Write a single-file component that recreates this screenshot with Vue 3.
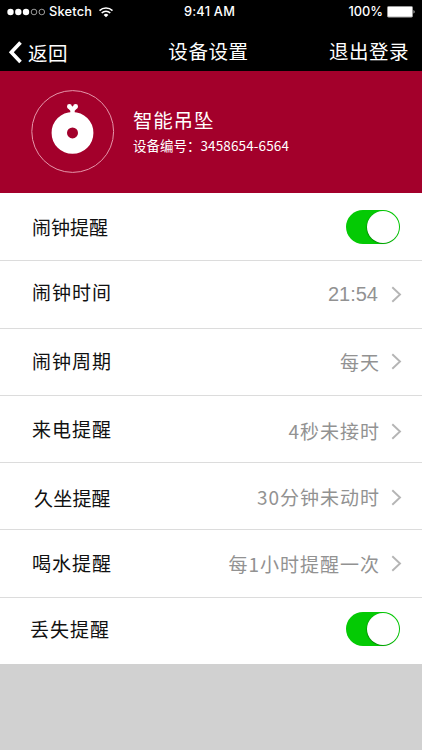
<script setup>
import { ref } from 'vue'

const rows = ref([
  { key: 'alarm', label: '闹钟提醒', toggle: true, on: true },
  { key: 'time', label: '闹钟时间', value: '21:54' },
  { key: 'cycle', label: '闹钟周期', value: '每天' },
  { key: 'call', label: '来电提醒', value: '4秒未接时' },
  { key: 'sit', label: '久坐提醒', value: '30分钟未动时' },
  { key: 'water', label: '喝水提醒', value: '每1小时提醒一次' },
  { key: 'lost', label: '丢失提醒', toggle: true, on: true },
])
</script>

<template>
  <div class="screen">
    <header class="top">
      <div class="status">
        <div class="carrier">
          <svg class="dots" width="39" height="8" viewBox="0 0 39 8">
            <g fill="#fff">
              <circle cx="3.5" cy="4" r="3.2" />
              <circle cx="11.3" cy="4" r="3.2" />
              <circle cx="19" cy="4" r="3.2" />
            </g>
            <g fill="none" stroke="#ddd" stroke-width=".7">
              <circle cx="27" cy="4" r="2.8" />
              <circle cx="34.8" cy="4" r="2.8" />
            </g>
          </svg>
          <span class="net">Sketch</span>
          <svg class="wifi" width="14" height="11" viewBox="0 0 14 11">
            <g fill="none" stroke="#fff" stroke-width="1.5">
              <path d="M.5 3.6a9.4 9.4 0 0 1 13 0" />
              <path d="M2.7 6a6.2 6.2 0 0 1 8.6 0" />
            </g>
            <path d="M4.6 7.9a3.4 3.4 0 0 1 4.8 0L7 10.3z" fill="#fff" />
          </svg>
        </div>
        <span class="clock">9:41 AM</span>
        <div class="power">
          <span>100%</span>
          <svg width="28" height="12" viewBox="0 0 28 12">
            <rect x=".5" y=".5" width="25" height="10.6" rx="1" fill="#fff" stroke="#999" />
            <path d="M26.6 4v3.6c1.2-.5 1.2-3.1 0-3.6z" fill="#fff" />
          </svg>
        </div>
      </div>
      <nav class="nav">
        <div class="back">
          <svg width="14" height="23" viewBox="0 0 14 23">
            <path d="M12.5 1.5 3.3 11.3 12.5 21.1" fill="none" stroke="#fff" stroke-width="3.6" />
          </svg>
          <span class="backtext">返回</span>
        </div>
        <h1 class="title">设备设置</h1>
        <span class="logout">退出登录</span>
      </nav>
    </header>

    <section class="device">
      <svg class="avatar" width="84" height="84" viewBox="0 0 84 84">
        <circle cx="41.7" cy="41.5" r="40.9" fill="none" stroke="#e596aa" stroke-width="1" />
        <g fill="#fff">
          <circle cx="38.4" cy="16.4" r="2.4" />
          <circle cx="44.6" cy="16.4" r="2.4" />
          <path d="M36.4 17.8 39.3 20.8V25H43.7V20.8L46.6 17.800 44 15 41.500 16.600 39 15z" />
        </g>
        <circle cx="41.5" cy="42.9" r="13.2" fill="none" stroke="#fff" stroke-width="15.4" />
      </svg>
      <div class="info">
        <div class="name">智能吊坠</div>
        <div class="serial">设备编号：<span class="num">3458654-6564</span></div>
      </div>
    </section>

    <main class="list">
      <div v-for="row in rows" :key="row.key" class="row" :class="row.key">
        <span class="label">{{ row.label }}</span>
        <button v-if="row.toggle" class="switch" :class="{ on: row.on }" @click="row.on = !row.on">
          <span class="knob"></span>
        </button>
        <div v-else class="detail">
          <span class="value">{{ row.value }}</span>
          <svg class="chevron" width="11" height="17" viewBox="0 0 11 17">
            <path d="M1.3 1.3 9 8.5 1.3 15.7" fill="none" stroke="#b5b5b5" stroke-width="1.9" />
          </svg>
        </div>
      </div>
    </main>
  </div>
</template>

<style>
body {
  background: #d1d1d1;
}
</style>

<style scoped>
.screen {
  width: 422px;
  height: 750px;
  overflow: hidden;
  background: #d1d1d1;
  font-family: "Noto Sans CJK SC", sans-serif;
}
.top {
  height: 71px;
  background: #000;
  color: #fff;
}
.status {
  display: grid;
  grid-template-columns: 1fr auto 1fr;
  align-items: center;
  height: 24px;
  padding: 0 7px;
  font: 500 12.8px/24px Inter, "Liberation Sans", sans-serif;
}
.carrier,
.power {
  display: flex;
  align-items: center;
}
.net {
  margin-left: 3px;
  letter-spacing: .2px;
}
.wifi {
  margin-left: 7px;
}
.clock {
  padding-right: 3px;
  letter-spacing: .25px;
}
.power {
  justify-content: flex-end;
  gap: 4px;
}
.nav {
  display: grid;
  grid-template-columns: 1fr auto 1fr;
  height: 47px;
  padding: 0 13px 0 8px;
  font-size: 19.5px;
  line-height: 54px;
}
.back {
  display: flex;
  align-items: center;
  height: 47px;
  padding-top: 5px;
}
.backtext {
  margin-left: 6px;
  line-height: 47px;
  letter-spacing: .5px;
}
.title {
  margin: 0;
  font-size: inherit;
  font-weight: 400;
  letter-spacing: .6px;
}
.logout {
  justify-self: end;
  letter-spacing: .5px;
}
.device {
  display: flex;
  height: 122px;
  box-sizing: border-box;
  padding: 19px 0 0 31px;
  background: #a3002b;
  color: #fff;
}
.info {
  padding: 16px 0 0 18px;
}
.name {
  font-size: 19.5px;
  line-height: 28px;
  letter-spacing: .8px;
}
.serial {
  font-size: 13.5px;
  line-height: 22px;
}
.num {
  letter-spacing: .12px;
}
.list {
  display: grid;
  grid-template-rows: repeat(7, 1fr);
  height: 471px;
  background: #fff;
}
.row {
  display: flex;
  align-items: center;
  justify-content: space-between;
  padding: 0 20px 0 32px;
  border-top: 1px solid #dcdcdc;
}
.row:first-child {
  border-top-color: #fff;
}
.label {
  color: #111;
  font-size: 19px;
  line-height: 28px;
  letter-spacing: 1px;
}
.detail {
  display: flex;
  align-items: center;
  color: #929292;
  font-size: 19px;
  line-height: 28px;
  letter-spacing: 1px;
}
.chevron {
  margin-left: 11px;
}
.switch {
  display: flex;
  justify-content: flex-start;
  width: 54px;
  height: 34px;
  box-sizing: border-box;
  margin: 0 2px 0 0;
  padding: 1px;
  border: 0;
  border-radius: 17px;
  background: #ccc;
}
.switch.on {
  justify-content: flex-end;
  background: #04ca04;
}
.knob {
  width: 32px;
  height: 32px;
  border-radius: 50%;
  background: #fff;
  box-shadow: -.5px .5px 1px rgba(0, 70, 0, .6);
}
.alarm .label {
  letter-spacing: 0;
}
.time .label {
  padding-bottom: 5px;
}
.time .value {
  padding-right: 2px;
  font-family: "Liberation Sans", sans-serif;
  font-size: 20px;
  letter-spacing: 0;
}
.cycle .label {
  padding-bottom: 2px;
}
.call .detail {
  padding-top: 5px;
}
.sit {
  padding-left: 34px;
}
.sit .label {
  padding-top: 3px;
  letter-spacing: .2px;
}
.sit .detail {
  padding-top: 2px;
}
.water .label {
  padding-bottom: 2px;
}
.lost {
  padding-left: 30px;
}
.lost .label {
  padding-bottom: 3px;
}
.lost .switch {
  margin-bottom: 3px;
}
</style>
